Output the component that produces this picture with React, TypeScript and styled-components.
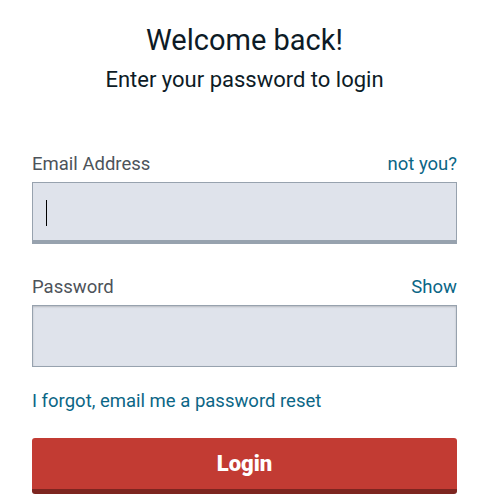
import React from "react";
import styled, { createGlobalStyle } from "styled-components";

const GlobalStyle = createGlobalStyle`
  body {
    margin: 0;
    background: #ffffff;
    font-family: Roboto, "Noto Sans", Arial, sans-serif;
  }
`;

const Page = styled.div`
  display: flex;
  flex-direction: column;
  padding: 22px 26px 0 32px;
`;

const Title = styled.h1`
  margin: 0;
  text-align: center;
  font-size: 29px;
  line-height: 36px;
  font-weight: 400;
  color: #0d1b26;
`;

const Subtitle = styled.h2`
  margin: 8px 0 0;
  text-align: center;
  font-size: 22px;
  line-height: 28px;
  font-weight: 400;
  color: #0d1b26;
`;

const Field = styled.div<{ $top: number }>`
  display: flex;
  flex-direction: column;
  gap: 6px;
  margin-top: ${(p) => p.$top}px;
`;

const LabelRow = styled.div`
  display: flex;
  justify-content: space-between;
  align-items: baseline;
  font-size: 18.5px;
  line-height: 24px;
`;

const Label = styled.label`
  color: #4d535a;
`;

const Link = styled.a`
  color: #0b6686;
  text-decoration: none;
  cursor: pointer;
  font-size: 18.5px;
  line-height: 24px;
`;

const InputWrap = styled.div`
  position: relative;
`;

const Input = styled.input<{ $focused?: boolean }>`
  display: block;
  box-sizing: border-box;
  width: 100%;
  height: 62px;
  margin: 0;
  padding: 0 14px;
  font-family: inherit;
  font-size: 18px;
  background: #dfe3eb;
  border: 1px solid #97a2ae;
  border-bottom-width: ${(p) => (p.$focused ? 4 : 1)}px;
  border-radius: 0;
  box-shadow: ${(p) => (p.$focused ? "none" : "inset 0 1px 2px rgba(0,0,0,0.18)")};
  outline: none;
  color: #222;
`;

const Caret = styled.span`
  position: absolute;
  left: 14px;
  top: 18px;
  width: 1px;
  height: 26px;
  background: #000;
`;

const Forgot = styled(Link)`
  margin-top: 22px;
  align-self: flex-start;
`;

const LoginButton = styled.button`
  margin-top: 25px;
  height: 56px;
  box-sizing: border-box;
  width: 100%;
  border: none;
  border-bottom: 5px solid #7d2520;
  border-radius: 3px;
  background: #c23b33;
  color: #ffffff;
  font-family: Roboto, "Noto Sans", Arial, sans-serif;
  font-size: 22px;
  font-weight: 900;
  padding: 0;
  cursor: pointer;
`;

const App: React.FC = () => {
  return (
    <>
      <GlobalStyle />
      <Page>
        <Title>Welcome back!</Title>
        <Subtitle>Enter your password to login</Subtitle>
        <Field $top={58}>
          <LabelRow>
            <Label htmlFor="email">Email Address</Label>
            <Link>not you?</Link>
          </LabelRow>
          <InputWrap>
            <Input id="email" type="email" readOnly $focused />
            <Caret />
          </InputWrap>
        </Field>
        <Field $top={31}>
          <LabelRow>
            <Label htmlFor="password">Password</Label>
            <Link>Show</Link>
          </LabelRow>
          <Input id="password" type="password" readOnly />
        </Field>
        <Forgot>I forgot, email me a password reset</Forgot>
        <LoginButton>Login</LoginButton>
      </Page>
    </>
  );
};

export default App;
